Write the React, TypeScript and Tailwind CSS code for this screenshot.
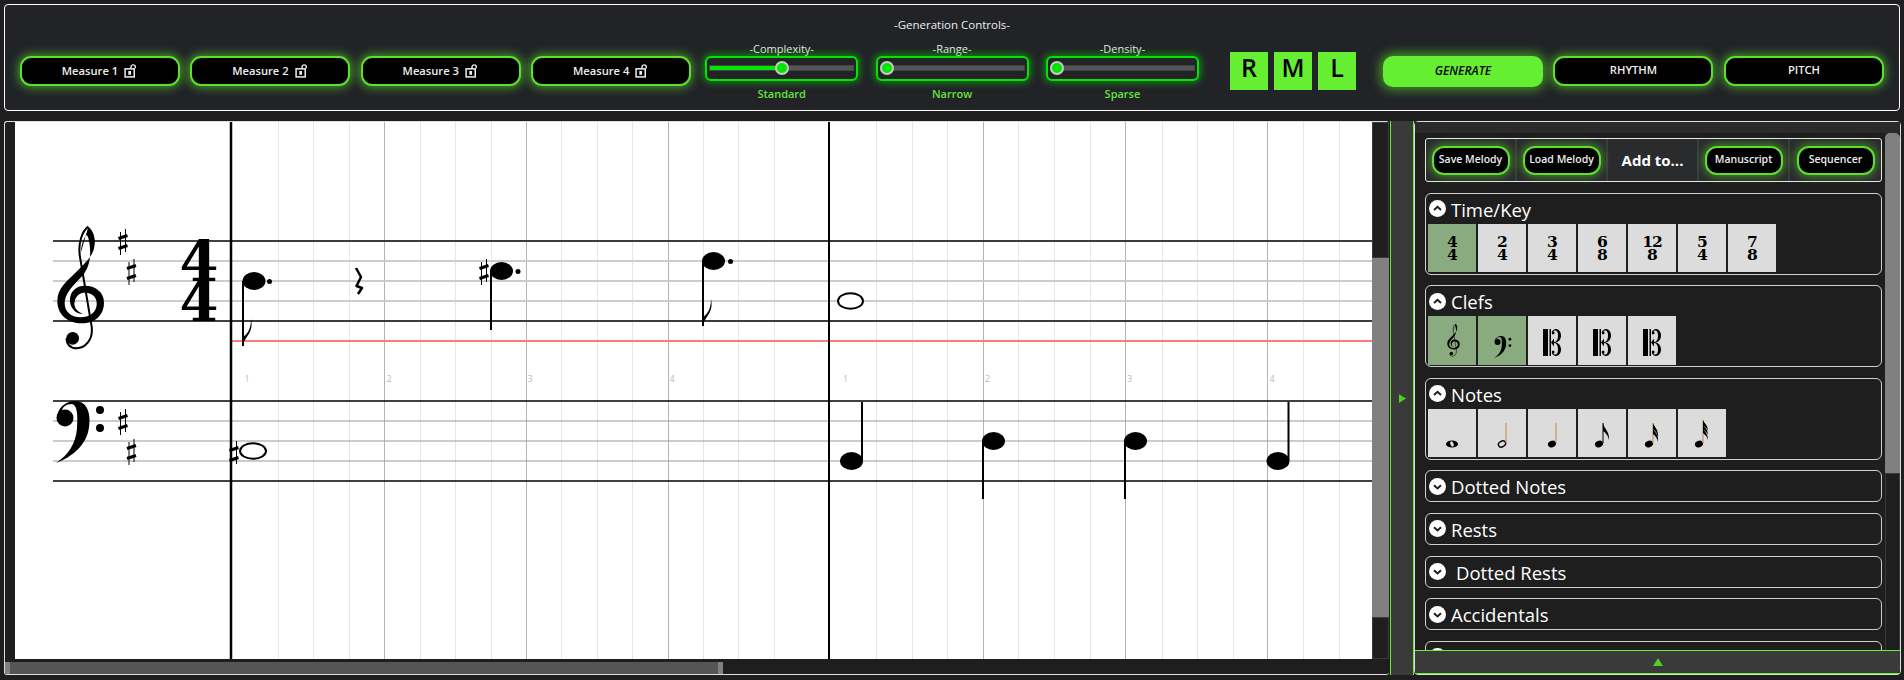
import React from "react";

const font = "font-['Open_Sans','Liberation_Sans',sans-serif]";
const glowButton =
  "h-[30px] w-[160px] shrink-0 rounded-[11px] border-2 border-[#5ce02c] bg-black text-[11.2px] font-semibold text-[#eeeeee] shadow-[0_0_10px_2px_rgba(92,224,44,0.6)] flex items-center justify-center";

const sliders = [
  { label: "-Complexity-", value: "Standard", pct: 50 },
  { label: "-Range-", value: "Narrow", pct: 0 },
  { label: "-Density-", value: "Sparse", pct: 0 },
];

const lightGrid = [278.5, 313.5, 349.5, 420.5, 455.5, 491.5, 561.5, 597.5, 632.5, 703.5, 738.5, 774.5, 876.5, 912.5, 947.5, 1018.5, 1054.5, 1090.5, 1162.5, 1197.5, 1233.5, 1303.5, 1339.5];
const darkGrid = [384.5, 526.5, 668.5, 983.5, 1125.5, 1267.5];
const beatLabels = [
  { x: 247, t: "1" }, { x: 389, t: "2" }, { x: 530, t: "3" }, { x: 672, t: "4" },
  { x: 845.5, t: "1" }, { x: 987.5, t: "2" }, { x: 1129.5, t: "3" }, { x: 1272, t: "4" },
];

// music glyph drawings
const TrebleClef = () => (
  <>
    <path
      fill="currentColor"
      d="M145 20C160 32 168 55 163 80C158 112 128 135 105 160C80 185 52 205 52 243C52 285 85 310 125 310C165 310 192 285 192 248C192 215 165 197 135 197C105 197 88 218 90 245C92 265 108 282 128 282C112 275 100 262 104 245C106 228 122 216 140 218C160 220 172 235 170 255C168 278 148 292 122 292C92 292 74 275 74 250C74 222 98 198 123 172C148 146 152 115 150 85C149 65 145 50 140 45C130 55 124 75 122 100Z"
    />
    <path
      fill="none"
      stroke="currentColor"
      strokeWidth="6"
      d="M145 20C125 35 115 70 119 105L155 320C160 360 135 385 110 385C90 385 78 370 80 355"
    />
    <circle cx="98" cy="355" r="19" fill="currentColor" />
  </>
);

const BassClef = () => (
  <>
    <path
      fill="currentColor"
      d="M57 418C57 408 66 401 75 401C88 401 91 415 89 427C87 445 72 457 56 463C68 455 76 444 77 428C78 414 77 405 72 404C66 404 63 407 62 410Z"
    />
    <circle cx="65" cy="418" r="8.5" fill="currentColor" />
    <circle cx="100" cy="410" r="4" fill="currentColor" />
    <circle cx="100" cy="428" r="4" fill="currentColor" />
  </>
);

const Sharp = ({ x, y }: { x: number; y: number }) => (
  <g stroke="black">
    <line x1={x - 2.5} y1={y - 10} x2={x - 2.5} y2={y + 13} strokeWidth="1" />
    <line x1={x + 2.5} y1={y - 13} x2={x + 2.5} y2={y + 10} strokeWidth="1" />
    <line x1={x - 4.5} y1={y - 3.5} x2={x + 4.5} y2={y - 6.5} strokeWidth="3" />
    <line x1={x - 4.5} y1={y + 6.5} x2={x + 4.5} y2={y + 3.5} strokeWidth="3" />
  </g>
);

const Head = ({ x, y }: { x: number; y: number }) => (
  <ellipse cx={x} cy={y} rx="11.5" ry="9" fill="black" />
);

const Stem = ({ x, y1, y2 }: { x: number; y1: number; y2: number }) => (
  <line x1={x} y1={y1} x2={x} y2={y2} stroke="black" strokeWidth="2" />
);

const Flag = ({ x, bottom, top }: { x: number; bottom: number; top: number }) => (
  <path
    fill="black"
    d={`M${x - 1} ${bottom}C${x + 2} ${bottom - 11} ${x + 11} ${bottom - 14} ${x + 8} ${top}C${x + 8} ${bottom - 17} ${x + 4} ${bottom - 13} ${x - 1} ${bottom - 9}Z`}
  />
);

const Dot = ({ x, y }: { x: number; y: number }) => <circle cx={x} cy={y} r="2.5" fill="black" />;

const Score = () => (
  <svg viewBox="15 122 1357 537" className="block h-full w-full bg-white">
    {lightGrid.map((x) => (
      <line key={x} x1={x} y1="122" x2={x} y2="659" stroke="#e6e6e6" strokeWidth="1" />
    ))}
    {darkGrid.map((x) => (
      <line key={x} x1={x} y1="122" x2={x} y2="659" stroke="#b4b4b4" strokeWidth="1" />
    ))}

    {/* treble staff */}
    <g stroke="#999999" strokeWidth="1">
      <line x1="53" y1="261" x2="231" y2="261" />
      <line x1="53" y1="281" x2="231" y2="281" />
      <line x1="53" y1="301" x2="231" y2="301" />
    </g>
    <line x1="53" y1="241" x2="231" y2="241" stroke="black" strokeWidth="1.5" />
    <line x1="53" y1="321" x2="231" y2="321" stroke="black" strokeWidth="1.5" />
    <g stroke="#cccccc" strokeWidth="2">
      <line x1="231" y1="261" x2="1372" y2="261" />
      <line x1="231" y1="281" x2="1372" y2="281" />
      <line x1="231" y1="301" x2="1372" y2="301" />
    </g>
    <line x1="231" y1="241" x2="1372" y2="241" stroke="#3c3c3c" strokeWidth="2" />
    <line x1="231" y1="321" x2="1372" y2="321" stroke="#3c3c3c" strokeWidth="2" />
    <line x1="231" y1="341" x2="1372" y2="341" stroke="#ff7b7b" strokeWidth="2" />

    {/* bass staff */}
    <g stroke="#999999" strokeWidth="1">
      <line x1="53" y1="421" x2="1372" y2="421" />
      <line x1="53" y1="441" x2="1372" y2="441" />
      <line x1="53" y1="461" x2="1372" y2="461" />
    </g>
    <line x1="53" y1="401" x2="1372" y2="401" stroke="black" strokeWidth="1.5" />
    <line x1="53" y1="481" x2="1372" y2="481" stroke="black" strokeWidth="1.5" />

    <line x1="231" y1="122" x2="231" y2="659" stroke="black" strokeWidth="2.5" />
    <line x1="829" y1="122" x2="829" y2="659" stroke="black" strokeWidth="2" />

    <g transform="translate(40 220) scale(0.3333)" className="text-black">
      <TrebleClef />
    </g>
    <g className="text-black">
      <BassClef />
    </g>
    <Sharp x={123} y={242} />
    <Sharp x={131.5} y={272} />
    <Sharp x={123} y={422} />
    <Sharp x={131.5} y={452} />
    <text x="199" y="281" textAnchor="middle" className="fill-black font-['DejaVu_Serif',serif] text-[56px] font-bold">4</text>
    <text x="199" y="321" textAnchor="middle" className="fill-black font-['DejaVu_Serif',serif] text-[56px] font-bold">4</text>

    {/* treble notes */}
    <Head x={254} y={281} />
    <Stem x={243} y1={281} y2={346} />
    <Flag x={243} bottom={347} top={319} />
    <Dot x={269.5} y={281.5} />
    <path d="M356 268L361 277L356.5 286L362 288L358 294" fill="none" stroke="black" strokeWidth="2.5" strokeLinejoin="round" />
    <Sharp x={484} y={272} />
    <Head x={501.5} y={271} />
    <Stem x={491} y1={271} y2={330} />
    <Dot x={518} y={271.5} />
    <Head x={713.5} y={261} />
    <Stem x={703} y1={261} y2={326} />
    <Flag x={703} bottom={327} top={299} />
    <Dot x={730.5} y={261.5} />
    <ellipse cx="850.5" cy="301" rx="12.5" ry="7.8" fill="white" stroke="black" strokeWidth="2" />

    {/* bass notes */}
    <Sharp x={234} y={454} />
    <ellipse cx="253" cy="451" rx="13" ry="7.8" fill="white" stroke="black" strokeWidth="2" />
    <Head x={851.5} y={461} />
    <Stem x={862} y1={402} y2={460} />
    <Head x={993.5} y={441} />
    <Stem x={983} y1={441} y2={499} />
    <Head x={1135.5} y={441} />
    <Stem x={1125} y1={441} y2={499} />
    <Head x={1278} y={461} />
    <Stem x={1288.5} y1={402} y2={460} />

    {beatLabels.map((b) => (
      <text key={b.x} x={b.x} y="381.5" textAnchor="middle" className="fill-[#bbbbbb] font-['Open_Sans',sans-serif] text-[9px]">
        {b.t}
      </text>
    ))}
  </svg>
);

const Lock = () => (
  <svg viewBox="0 0 13 13" className="ml-[6px] h-[14px] w-[14px] text-[#eeeeee]">
    <rect x="1" y="4.5" width="8.5" height="7.5" fill="none" stroke="currentColor" strokeWidth="1.4" />
    <rect x="4" y="6.5" width="2.5" height="3.5" fill="currentColor" />
    <path d="M6.5 4.5V2.8A2 2 0 0 1 10.5 2.8V4" fill="none" stroke="currentColor" strokeWidth="1.3" />
  </svg>
);

const Slider = ({ label, value, pct }: { label: string; value: string; pct: number }) => (
  <div className="flex w-[153px] shrink-0 flex-col items-center">
    <div className="h-[14px] pt-[2px] text-[11px] leading-[10px] text-[#e8e8e8]">{label}</div>
    <div className="flex h-[25px] w-full items-center rounded-[6px] border-2 border-[#00e600] bg-[#212327] px-[3px] shadow-[0_0_7px_2px_rgba(0,230,0,0.5)]">
      <div className="relative h-[4px] w-full bg-[#555555] outline outline-1 outline-[#444444]">
        <div className="h-full bg-[#00e600]" style={{ width: `${pct}%` }} />
        <div
          className="absolute top-1/2 h-[14px] w-[14px] -translate-y-1/2 rounded-full border-2 border-[#c8c8c8] bg-[#00e600]"
          style={{ left: pct === 0 ? "-1px" : `calc(${pct}% - 7px)` }}
        />
      </div>
    </div>
    <div className="pt-[5px] text-[11px] font-semibold leading-[15px] text-[#66e33a]">{value}</div>
  </div>
);

const Rml = ({ t }: { t: string }) => (
  <div className="flex h-[38px] w-[38px] shrink-0 items-center justify-center bg-[#66ee33] pb-[7px] text-[25px] font-semibold text-black">{t}</div>
);

const Controls = () => (
  <div className="h-[107px] rounded-[4px] border border-white bg-[#212327] px-[15px]">
    <div className="pt-[11px] text-center text-[11.5px] leading-[17px] text-[#eeeeee]">-Generation Controls-</div>
    <div className="mt-[11px] flex h-[54px] items-center">
      <div className="flex gap-[10.4px]">
        {[1, 2, 3, 4].map((n) => (
          <div key={n} className={glowButton}>
            Measure {n}
            <Lock />
          </div>
        ))}
      </div>
      <div className="ml-[14px] flex gap-[17.4px]">
        {sliders.map((s) => (
          <Slider key={s.label} {...s} />
        ))}
      </div>
      <div className="ml-[31px] flex gap-[6px]">
        <Rml t="R" />
        <Rml t="M" />
        <Rml t="L" />
      </div>
      <div className="ml-[27px] flex gap-[10.5px]">
        <div className="flex h-[31px] w-[160px] items-center justify-center rounded-[10px] bg-[#66ee33] text-[12px] font-semibold italic text-black shadow-[0_0_11px_3px_rgba(92,224,44,0.6)]">
          GENERATE
        </div>
        <div className={glowButton}>RHYTHM</div>
        <div className={glowButton}>PITCH</div>
      </div>
    </div>
  </div>
);

const ScorePanel = () => (
  <div className="flex h-[554px] w-[1385px] shrink-0 flex-col rounded-[3px] border-b border-l border-t border-[#dddddd] bg-[#1e1e1e]">
    <div className="flex h-[537px]">
      <div className="w-[10px] shrink-0" />
      <div className="h-full w-[1357px] shrink-0">
        <Score />
      </div>
      <div className="flex w-[17px] shrink-0 flex-col">
        <div className="h-[136px] border border-[#3a3a3a] bg-[#1e1e1e]" />
        <div className="h-[359px] bg-[#808080]" />
        <div className="flex-1 border border-[#3a3a3a] bg-[#1e1e1e]" />
      </div>
    </div>
    <div className="mt-[3px] flex h-[12px] items-stretch">
      <div className="w-[5px] shrink-0 bg-[#808080]" />
      <div className="w-[708px] bg-[#555555]" />
      <div className="w-[5px] shrink-0 bg-[#808080]" />
    </div>
  </div>
);

const Chevron = ({ open }: { open: boolean }) => (
  <svg viewBox="0 0 17 17" className="h-[17px] w-[17px] shrink-0">
    <circle cx="8.5" cy="8.5" r="8.5" fill="white" />
    <path d={open ? "M5 10L8.5 6.8L12 10" : "M5 7.2L8.5 10.4L12 7.2"} fill="none" stroke="#1e1e1e" strokeWidth="2" />
  </svg>
);

const Tile = ({ active, children }: { active?: boolean; children: React.ReactNode }) => (
  <div className={`flex h-[48.5px] w-[48px] shrink-0 items-center justify-center ${active ? "bg-[#8aaa80]" : "bg-[#dcdcdc]"}`}>{children}</div>
);

const TimeSig = ({ top, bottom }: { top: string; bottom: string }) => (
  <div className="flex flex-col items-center font-['DejaVu_Serif',serif] text-[15.5px] font-bold leading-[13px] tracking-[-1px] text-black">
    <span>{top}</span>
    <span>{bottom}</span>
  </div>
);

const AltoClef = () => (
  <svg viewBox="0 0 18 27" className="mt-[4px] h-[27px] w-[18px] text-black">
    <rect x="0" y="0" width="5" height="27" fill="currentColor" />
    <rect x="6.5" y="0" width="1.5" height="27" fill="currentColor" />
    <path
      d="M8 13.5L11 9.5V13C14 13 15 10 15 6.5C15 3 14 1.5 12 1.5C11 1.5 10.5 2 10.5 2.5C12 2.5 12 5.5 10 5.5C8.5 5.5 8.5 3 9.5 1.8C10.5 0.6 12 0 13 0C16 0 18 3 18 6.5C18 10.5 15.5 13.5 12 13.5C15.5 13.5 18 16.5 18 20.5C18 24 16 27 13 27C12 27 10.5 26.4 9.5 25.2C8.5 24 8.5 21.5 10 21.5C12 21.5 12 24.5 10.5 24.5C10.5 25 11 25.5 12 25.5C14 25.5 15 24 15 20.5C15 17 14 14 11 14V17.5Z"
      fill="currentColor"
    />
  </svg>
);

const NoteTile = ({ kind }: { kind: number }) => {
  const stemColor = "#b98a45";
  if (kind === 0) {
    return (
      <svg viewBox="0 0 48 48" className="h-[48px] w-[48px]">
        <ellipse cx="24" cy="35" rx="6" ry="3.6" fill="black" />
        <ellipse cx="24" cy="35" rx="1.6" ry="2.8" fill="#dcdcdc" transform="rotate(-25 24 35)" />
      </svg>
    );
  }
  if (kind === 1) {
    return (
      <svg viewBox="0 0 48 48" className="h-[48px] w-[48px]">
        <ellipse cx="24" cy="35" rx="3.8" ry="2.8" transform="rotate(-30 24 35)" fill="none" stroke="black" strokeWidth="1.4" />
        <line x1="28" y1="14" x2="28" y2="34" stroke={stemColor} strokeWidth="1" />
      </svg>
    );
  }
  const cx = kind === 2 ? 24 : 21;
  const sx = cx + 4;
  return (
    <svg viewBox="0 0 48 48" className="h-[48px] w-[48px]">
      <ellipse cx={cx} cy="35" rx="4.2" ry="3.2" transform={`rotate(-25 ${cx} 35)`} fill="black" />
      <line x1={sx} y1={kind === 5 ? 11 : 14} x2={sx} y2="34" stroke={kind === 3 ? "black" : stemColor} strokeWidth="1" />
      {kind === 3 && <path d="M25 14C26 20 32 22 31 32C31 28 28 24 25 22Z" fill="black" />}
      {kind === 4 && (
        <>
          <path d="M25 14C26 18 31 20 30 29C29.500 25 28 22 25 20Z" fill="black" />
          <path d="M25 19C26 23 31 25 30 33C29.500 30 28 27 25 25Z" fill="black" />
        </>
      )}
      {kind === 5 && (
        <>
          <path d="M25 11C26 14 30 16 30 22C29 19 27 18 25 16Z" fill="black" />
          <path d="M25 15C26 18 30 20 30 26C29 23 27 22 25 20Z" fill="black" />
          <path d="M25 19C26 22 30 24 30 31C29 27 27 26 25 24Z" fill="black" />
        </>
      )}
    </svg>
  );
};

const Section = ({ title, open, h, titleClass, children }: { title: string; open?: boolean; h: string; titleClass?: string; children?: React.ReactNode }) => (
  <div className={`${h} shrink-0 rounded-[6px] border border-[#cfcfcf] pl-[2px] pr-[3px]`}>
    <div className="flex h-[30px] items-center pl-[1px]">
      <Chevron open={!!open} />
      <span className={`${titleClass ?? "ml-[5px]"} mt-[2px] text-[18.5px] leading-[30px] text-white`}>{title}</span>
    </div>
    {children && <div className="flex gap-[2px]">{children}</div>}
  </div>
);

const ToolButton = ({ t }: { t: string }) => (
  <div className="flex h-[29px] w-[78px] items-center justify-center rounded-[12px] border-2 border-[#5ce02c] bg-black text-[10.5px] font-semibold text-[#eeeeee] shadow-[0_0_8px_2px_rgba(92,224,44,0.5)]">
    {t}
  </div>
);

const Palette = () => (
  <div className="relative flex h-[554px] w-[487px] shrink-0 flex-col rounded-[4px] border border-[#dddddd] bg-[#1e1e1e]">
    <div className="h-[11px] shrink-0 bg-[#2a2a2a]" />
    <div className="flex min-h-0 flex-1">
      <div className="flex min-h-0 flex-1 flex-col gap-[10.6px] overflow-hidden pl-[10px] pr-[3px] pt-[5px]">
        <div className="grid h-[44px] shrink-0 grid-cols-5 divide-x-2 divide-[#3c3c3c] rounded-[3px] border border-[#e8e8e8] bg-[#2a2b2d]">
          <div className="flex items-center justify-center"><ToolButton t="Save Melody" /></div>
          <div className="flex items-center justify-center"><ToolButton t="Load Melody" /></div>
          <div className="flex items-center justify-center text-[15px] font-bold text-white">Add to...</div>
          <div className="flex items-center justify-center"><ToolButton t="Manuscript" /></div>
          <div className="flex items-center justify-center"><ToolButton t="Sequencer" /></div>
        </div>
        <Section title="Time/Key" open h="h-[82px]">
          <Tile active><TimeSig top="4" bottom="4" /></Tile>
          <Tile><TimeSig top="2" bottom="4" /></Tile>
          <Tile><TimeSig top="3" bottom="4" /></Tile>
          <Tile><TimeSig top="6" bottom="8" /></Tile>
          <Tile><TimeSig top="12" bottom="8" /></Tile>
          <Tile><TimeSig top="5" bottom="4" /></Tile>
          <Tile><TimeSig top="7" bottom="8" /></Tile>
        </Section>
        <Section title="Clefs" open h="h-[82px]">
          <Tile active>
            <svg viewBox="40 220 70 135" className="h-[36px] w-[20px] text-black">
              <g transform="translate(40 220) scale(0.3333)"><TrebleClef /></g>
            </svg>
          </Tile>
          <Tile active>
            <svg viewBox="53 398 52 68" className="mt-[14px] h-[24px] w-[19px] text-black"><BassClef /></svg>
          </Tile>
          <Tile><AltoClef /></Tile>
          <Tile><AltoClef /></Tile>
          <Tile><AltoClef /></Tile>
        </Section>
        <Section title="Notes" open h="h-[82px]">
          {[0, 1, 2, 3, 4, 5].map((k) => (
            <Tile key={k}><NoteTile kind={k} /></Tile>
          ))}
        </Section>
        <Section title="Dotted Notes" h="h-[32px]" />
        <Section title="Rests" h="h-[32px]" />
        <Section title="Dotted Rests" h="h-[32px]" titleClass="ml-[10px]" />
        <Section title="Accidentals" h="h-[32px]" />
        <Section title="Staff and Modifiers" h="h-[32px]" />
      </div>
      <div className="flex w-[15px] shrink-0 flex-col">
        <div className="h-[340px] rounded-t-[5px] bg-[#808080]" />
        <div className="flex-1 border border-[#3a3a3a]" />
      </div>
    </div>
    <div className="absolute bottom-0 left-0 right-0 flex h-[24px] items-center justify-center border-y border-[#66ee33] bg-[#3a3a3a]">
      <svg viewBox="0 0 10 8" className="h-[8px] w-[10px]"><path d="M5 0L10 8H0Z" fill="#4fd020" /></svg>
    </div>
  </div>
);

export default function App() {
  return (
    <div className={`${font} h-[680px] w-[1904px] overflow-hidden bg-[#1e1e1e] px-[4px] pt-[4px]`}>
      <Controls />
      <div className="mt-[10px] flex">
        <ScorePanel />
        <div className="ml-[1px] flex h-[554px] w-[24px] shrink-0 items-center justify-center border-x border-[#66ee33] bg-[#3a3a3a]">
          <svg viewBox="0 0 8 10" className="h-[9px] w-[7px]"><path d="M0 0L8 5L0 10Z" fill="#4fd020" /></svg>
        </div>
        <Palette />
      </div>
    </div>
  );
}
